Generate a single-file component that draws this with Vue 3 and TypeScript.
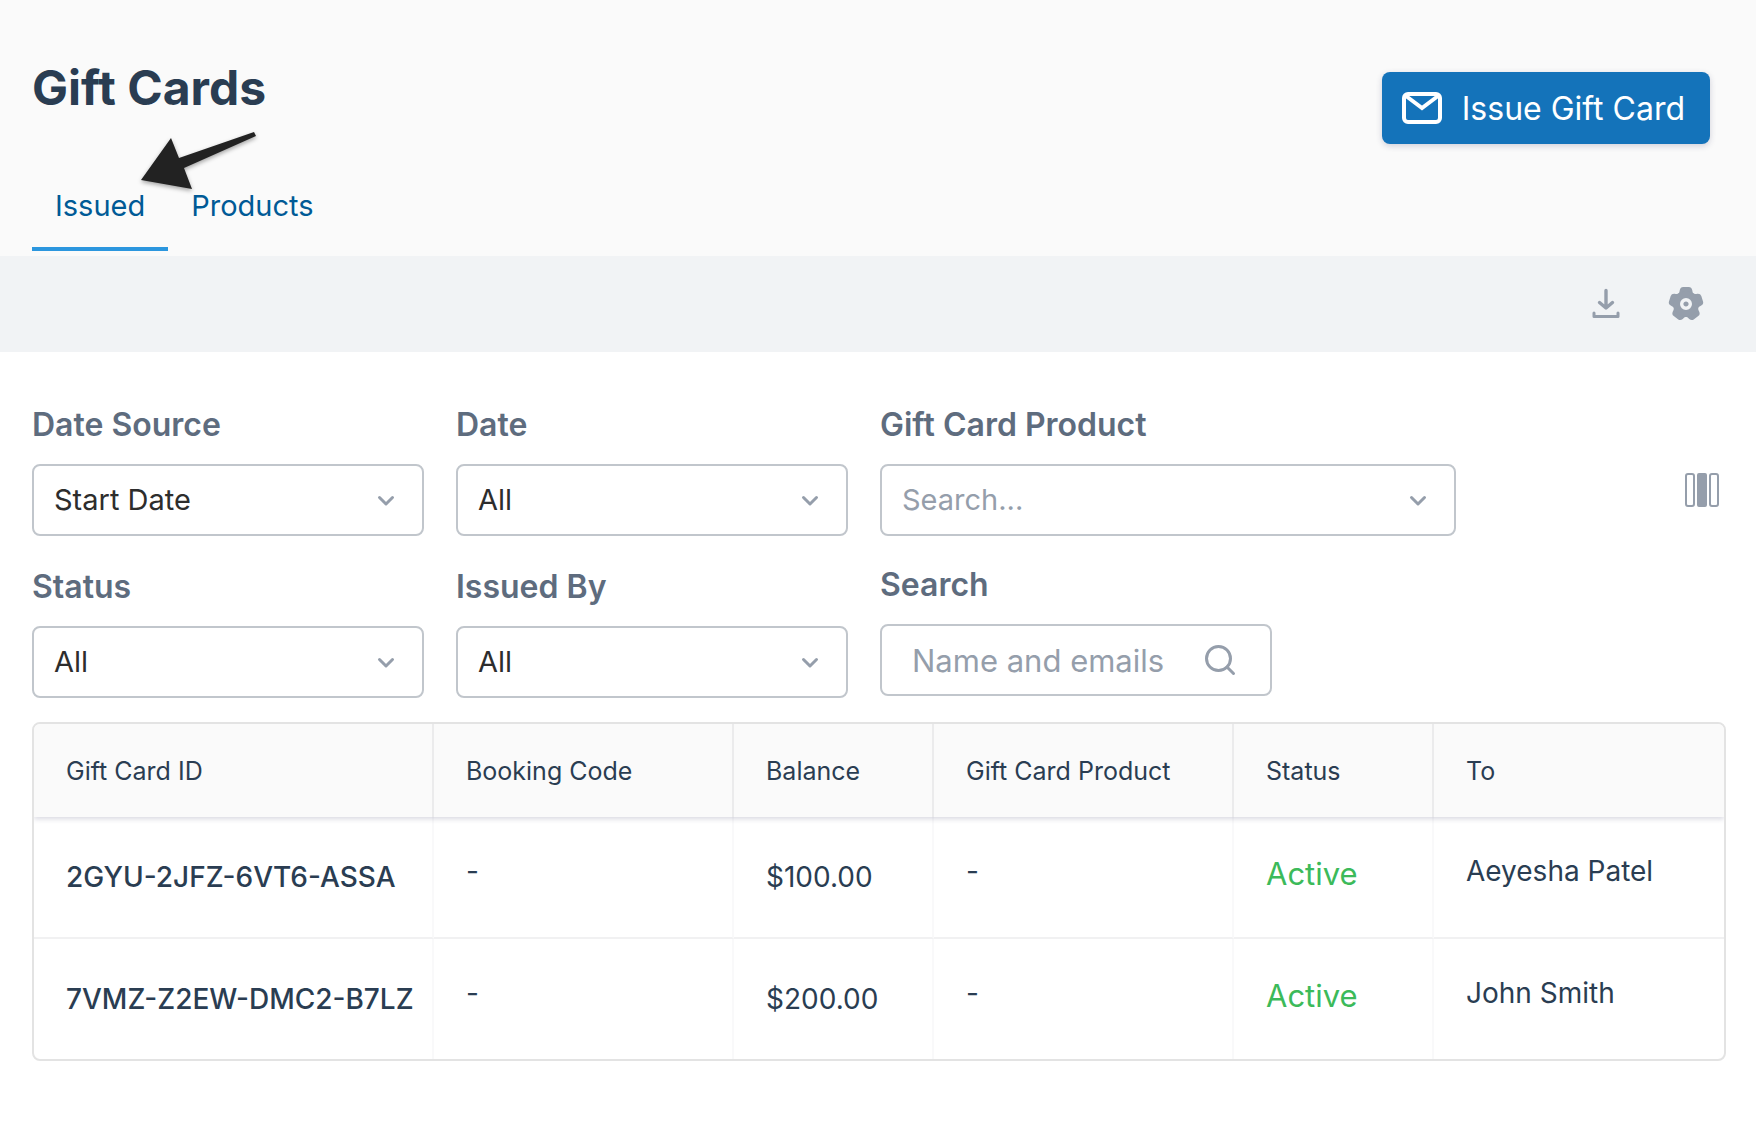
<script setup lang="ts">
import { ref } from 'vue'

interface SelectField {
  id: string
  label: string
  options: string[]
}

interface GiftCard {
  id: string
  booking: string
  balance: string
  product: string
  status: string
  to: string
}

const columns: SelectField[][] = [
  [
    { id: 'date-source', label: 'Date Source', options: ['Start Date', 'Issue Date'] },
    { id: 'status', label: 'Status', options: ['All', 'Active'] },
  ],
  [
    { id: 'date', label: 'Date', options: ['All', 'Today'] },
    { id: 'issued-by', label: 'Issued By', options: ['All'] },
  ],
]

const headings = ['Gift Card ID', 'Booking Code', 'Balance', 'Gift Card Product', 'Status', 'To']

const cards: GiftCard[] = [
  { id: '2GYU-2JFZ-6VT6-ASSA', booking: '-', balance: '$100.00', product: '-', status: 'Active', to: 'Aeyesha Patel' },
  { id: '7VMZ-Z2EW-DMC2-B7LZ', booking: '-', balance: '$200.00', product: '-', status: 'Active', to: 'John Smith' },
]

const petals = [0, 72, 144, 216, 288]
const product = ref('')
const query = ref('')
</script>

<template>
  <div class="page">
    <header class="header">
      <div>
        <h1>Gift Cards</h1>
        <nav class="tabs">
          <a href="#issued" class="tab active" aria-current="page">Issued</a>
          <a href="#products" class="tab">Products</a>
        </nav>
      </div>
      <button type="button" class="issue">
        <svg width="40" height="32" viewBox="0 0 40 32" fill="none" stroke="currentColor" stroke-width="4" aria-hidden="true">
          <rect x="2" y="2" width="36" height="28" rx="4" />
          <path d="M4 4l16 12L36 4" />
        </svg>
        Issue Gift Card
      </button>
      <svg class="pointer" width="130" height="76" viewBox="0 0 130 76" aria-hidden="true">
        <path d="M11 60L41 18L49 38L124 12L126 16L54 48L62 69Z" fill="#222" />
      </svg>
    </header>

    <div class="toolbar">
      <button type="button" class="icon-button" aria-label="Download">
        <svg width="28" height="32" viewBox="0 0 28 32" fill="none" stroke="currentColor" stroke-width="3.4" stroke-linecap="round" stroke-linejoin="round" aria-hidden="true">
          <path d="M14 2.500V19M7.500 14.500L14 20l6.500-5.500" />
          <path d="M2 25v3.500h24V25" stroke-width="3" />
        </svg>
      </button>
      <button type="button" class="icon-button" aria-label="Settings">
        <svg width="36" height="36" viewBox="-18 -18 36 36" aria-hidden="true">
          <g fill="currentColor">
            <path v-for="a in petals" :key="a" d="M-8 -10C-6.800 -11 -6.500 -12 -6.200 -14Q-5.500 -17 -2.800 -17H2.800Q5.500 -17 6.200 -14C6.500 -12 6.800 -11 8 -10L0 0Z" :transform="`rotate(${a})`" />
            <circle r="12.500" />
          </g>
          <circle r="4.300" fill="none" stroke="#f1f3f5" stroke-width="3.400" />
        </svg>
      </button>
    </div>

    <main class="content">
      <section class="filters">
        <div v-for="(column, i) in columns" :key="i" class="stack">
          <div v-for="field in column" :key="field.id" class="field">
            <label :for="field.id">{{ field.label }}</label>
            <div class="control">
              <select :id="field.id">
                <option v-for="o in field.options" :key="o">{{ o }}</option>
              </select>
              <svg class="chevron" width="18" height="12" viewBox="0 0 18 12" aria-hidden="true"><path d="M2.500 2.500L9 9l6.500-6.500" /></svg>
            </div>
          </div>
        </div>
        <div class="stack wide">
          <div class="field">
            <label for="product">Gift Card Product</label>
            <div class="control">
              <select id="product" v-model="product" :class="{ empty: !product }">
                <option value="">Search...</option>
              </select>
              <svg class="chevron" width="18" height="12" viewBox="0 0 18 12" aria-hidden="true"><path d="M2.500 2.500L9 9l6.500-6.500" /></svg>
            </div>
          </div>
          <div class="field search">
            <label for="search">Search</label>
            <div class="control">
              <input id="search" v-model="query" type="text" placeholder="Name and emails">
              <svg class="magnifier" width="34" height="34" viewBox="0 0 34 34" aria-hidden="true"><circle cx="15.500" cy="15.500" r="12" /><path d="M24 24l6.500 6.500" /></svg>
            </div>
          </div>
        </div>
        <button type="button" class="icon-button columns" aria-label="Choose columns">
          <svg width="34" height="34" viewBox="0 0 34 34" fill="none" stroke="currentColor" stroke-width="2" aria-hidden="true">
            <rect x="1" y="1" width="8" height="32" rx="2" />
            <rect x="13" y="1" width="8" height="32" rx="1" fill="currentColor" />
            <rect x="25" y="1" width="8" height="32" rx="2" />
          </svg>
        </button>
      </section>

      <div class="table-frame">
        <table>
          <colgroup>
            <col class="c-id"><col class="c-wide"><col class="c-mid"><col class="c-wide"><col class="c-mid"><col>
          </colgroup>
          <thead>
            <tr><th v-for="h in headings" :key="h" scope="col">{{ h }}</th></tr>
          </thead>
          <tbody>
            <tr v-for="card in cards" :key="card.id">
              <td class="code">{{ card.id }}</td>
              <td>{{ card.booking }}</td>
              <td class="money">{{ card.balance }}</td>
              <td>{{ card.product }}</td>
              <td class="status">{{ card.status }}</td>
              <td>{{ card.to }}</td>
            </tr>
          </tbody>
        </table>
      </div>
    </main>
  </div>
</template>

<style>
body {
  margin: 0;
  background: #fff;
}
</style>

<style scoped>
.page {
  font-family: Inter, "Liberation Sans", sans-serif;
  color: #2a3d52;
}
.page *,
.page *::before {
  box-sizing: border-box;
}
button,
select,
input {
  font: inherit;
}
.header {
  position: relative;
  display: flex;
  justify-content: space-between;
  align-items: flex-start;
  padding: 56px 46px 5px 32px;
  background: #fafafa;
}
h1 {
  margin: 0;
  font-size: 48px;
  line-height: 64px;
  font-weight: 700;
}
.tabs {
  display: flex;
  margin-top: 41px;
}
.tab {
  padding: 25px 23px 21px;
  border-bottom: 4px solid transparent;
  font-size: 29px;
  line-height: 40px;
  color: #005a96;
  text-decoration: none;
}
.tab.active {
  border-color: #2b96de;
}
.issue {
  display: flex;
  align-items: center;
  gap: 20px;
  height: 72px;
  margin-top: 16px;
  padding: 0 25px 0 20px;
  border: 0;
  border-radius: 8px;
  background: #1473ba;
  box-shadow: 0 2px 6px rgba(40, 40, 90, 0.2);
  color: #fff;
  font-size: 32px;
  white-space: nowrap;
}
.pointer {
  position: absolute;
  left: 130px;
  top: 120px;
  filter: drop-shadow(0 2px 2px rgba(0, 0, 0, 0.35));
}
.toolbar {
  display: flex;
  justify-content: flex-end;
  align-items: center;
  gap: 32px;
  height: 96px;
  padding: 0 46px;
  background: #f1f3f5;
}
.icon-button {
  display: flex;
  align-items: center;
  justify-content: center;
  width: 48px;
  height: 48px;
  padding: 0;
  border: 0;
  background: none;
  color: #959eab;
}
.content {
  padding: 53px 30px 75px 32px;
}
.filters {
  display: grid;
  grid-template-columns: 392fr 392fr 576fr 238fr;
  gap: 32px;
  align-items: start;
}
.stack {
  display: flex;
  flex-direction: column;
  gap: 31px;
}
.stack.wide {
  gap: 29px;
}
.field {
  display: flex;
  flex-direction: column;
  gap: 19px;
}
.search {
  width: 68%;
}
label {
  font-size: 32px;
  line-height: 40px;
  font-weight: 600;
  color: #5e6c7e;
}
.control {
  position: relative;
}
select,
input {
  display: block;
  width: 100%;
  height: 72px;
  padding: 0 20px 2px;
  border: 2px solid #c1c6cc;
  border-radius: 8px;
  background: #fff;
  color: #2d2d2d;
  font-size: 29px;
  appearance: none;
}
.empty {
  color: #959eab;
}
input {
  padding: 0 76px 0 30px;
  font-size: 31px;
}
input::placeholder {
  color: #959eab;
  opacity: 1;
}
.chevron,
.magnifier {
  position: absolute;
  fill: none;
  stroke: #959eab;
  stroke-width: 3;
  stroke-linecap: round;
  pointer-events: none;
}
.chevron {
  right: 29px;
  top: 31px;
  stroke-linejoin: round;
}
.magnifier {
  right: 35px;
  top: 19px;
}
.columns {
  justify-self: end;
  margin-top: 61px;
}
.table-frame {
  margin-top: 24px;
  border: 2px solid #e3e3e3;
  border-radius: 8px;
  overflow: hidden;
}
table {
  width: 100%;
  table-layout: fixed;
  border-collapse: separate;
  border-spacing: 0;
}
.c-id {
  width: 400px;
}
.c-wide {
  width: 300px;
}
.c-mid {
  width: 200px;
}
thead {
  position: relative;
  box-shadow: 0 2px 5px rgba(40, 40, 90, 0.18);
}
th {
  height: 93px;
  padding: 1px 32px 0;
  border-right: 2px solid #ebebec;
  background: #fafafa;
  font-size: 25px;
  line-height: 32px;
  font-weight: 400;
  text-align: left;
  white-space: nowrap;
}
td {
  height: 122px;
  padding: 34px 0 0 32px;
  border-right: 2px solid #f9f9fa;
  border-bottom: 2px solid #f1f1f2;
  font-size: 28px;
  line-height: 40px;
  vertical-align: top;
  white-space: nowrap;
}
th:last-child,
td:last-child {
  border-right: 0;
}
tbody tr:last-child td {
  height: 120px;
  border-bottom: 0;
}
.code,
.money {
  padding-top: 40px;
}
.code {
  font-weight: 500;
}
.status {
  padding-top: 37px;
  font-size: 31px;
  color: #3cba5a;
}
</style>
